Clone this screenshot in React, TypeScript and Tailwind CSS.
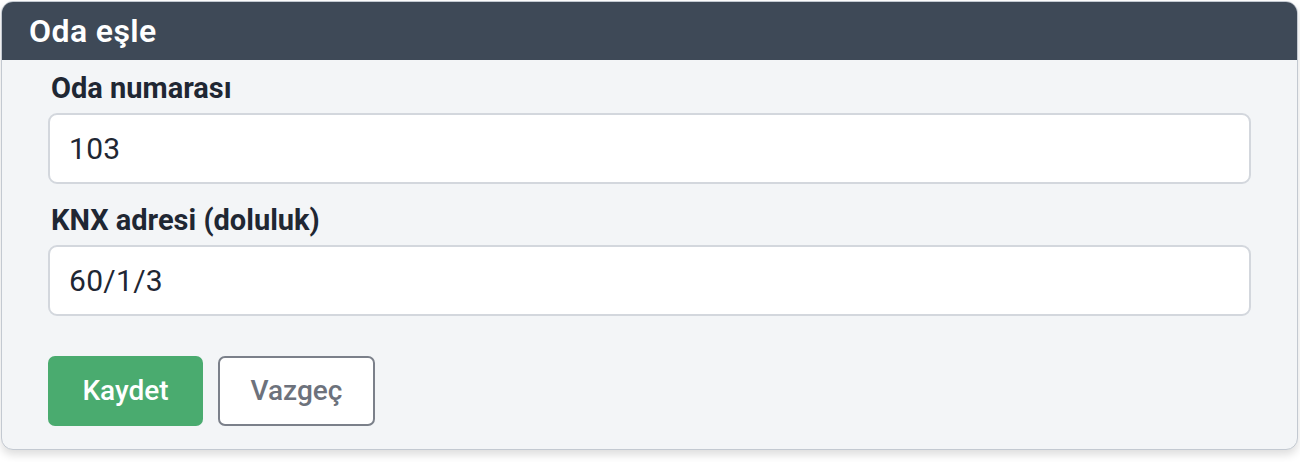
import React from "react";

const font = { fontFamily: 'Roboto, "Noto Sans", sans-serif' };

export default function App() {
  return (
    <div className="h-[462px] w-[1300px] bg-white pl-[1px] pt-[1px]" style={font}>
      <div className="w-[1297px] overflow-hidden rounded-[12px] border border-[#c3c9d1] bg-[#f3f5f7] shadow-[0_5px_9px_rgba(0,0,0,0.13)]">
        {/* Header */}
        <div className="flex h-[58px] items-center bg-[#3e4957] px-[27px]">
          <h2 className="text-[32px] font-semibold leading-none tracking-[0.4px] text-white">Oda eşle</h2>
        </div>

        {/* Form */}
        <div className="px-[46px] pb-[23px] pt-[11px]">
          <label className="block pl-[3px] text-[29px] font-bold leading-[34px] text-[#1f2733]">
            Oda numarası
          </label>
          <input
            defaultValue="103"
            className="mt-[8px] h-[71px] w-full rounded-[9px] border-2 border-[#d3d7dd] bg-white px-[19px] text-[30px] tracking-[0.3px] text-[#1f2733] outline-none"
          />

          <label className="mt-[19px] block pl-[3px] text-[29px] font-bold leading-[34px] text-[#1f2733]">
            KNX adresi (doluluk)
          </label>
          <input
            defaultValue="60/1/3"
            className="mt-[8px] h-[71px] w-full rounded-[9px] border-2 border-[#d3d7dd] bg-white px-[19px] text-[30px] tracking-[0.3px] text-[#1f2733] outline-none"
          />

          <div className="mt-[40px] flex gap-[15px]">
            <button className="h-[70px] w-[155px] rounded-[7px] bg-[#4aab6f] text-[28px] font-medium text-white">
              Kaydet
            </button>
            <button className="h-[70px] w-[157px] rounded-[7px] border-2 border-[#7b808a] bg-white text-[28px] font-medium text-[#6d727c]">
              Vazgeç
            </button>
          </div>
        </div>
      </div>
    </div>
  );
}
